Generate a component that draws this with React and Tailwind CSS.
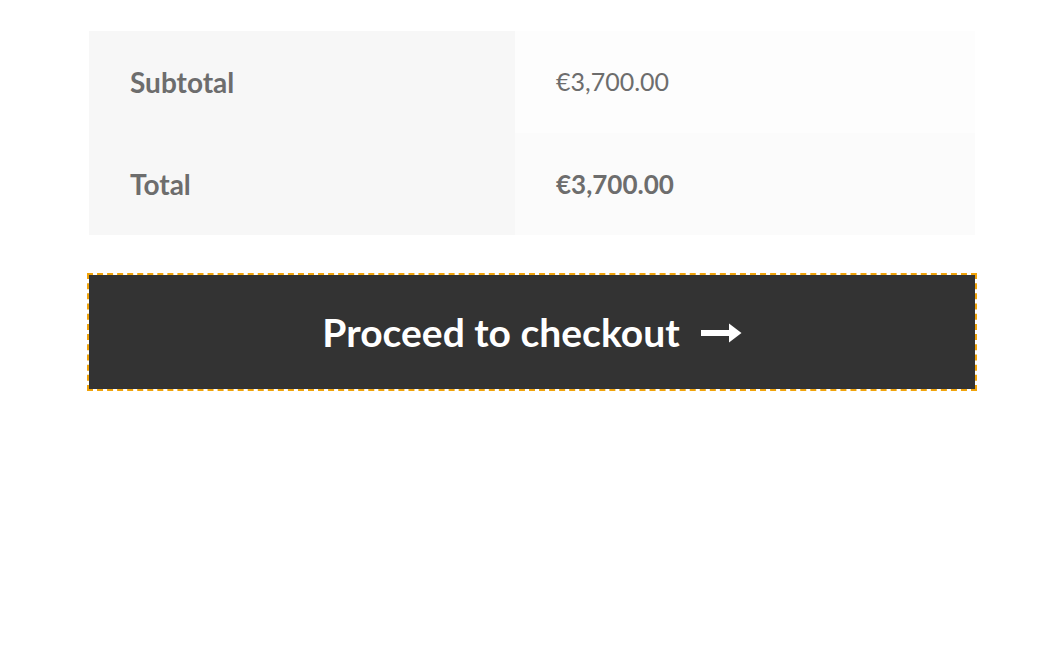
// Cart totals + checkout button
export default function App() {
  const rows = [
    { label: 'Subtotal', value: '€3,700.00', bold: false, valueBg: 'bg-[#fdfdfd]' },
    { label: 'Total', value: '€3,700.00', bold: true, valueBg: 'bg-[#fbfbfb]' },
  ]

  return (
    <div className="min-h-screen bg-white" style={{ fontFamily: 'Lato, "Open Sans", sans-serif' }}>
      <div className="mx-auto w-[886px] pt-[31px]">

        {/* Totals table */}
        <div className="grid grid-cols-[426px_1fr]">
          {rows.map((r) => (
            <div key={r.label} className="contents">
              <div className="flex h-[102px] items-center bg-[#f7f7f7] pl-[41px] text-[28px] font-bold text-[#6d6d6d]">
                {r.label}
              </div>
              <div
                className={`flex h-[102px] items-center pl-[41px] text-[#6d6d6d] ${r.valueBg} ${r.bold ? 'text-[26px] font-bold' : 'text-[25px] font-normal'}`}
              >
                {r.value}
              </div>
            </div>
          ))}
        </div>

        {/* Checkout button */}
        <button className="mt-[40px] flex h-[114px] w-full items-center justify-center gap-[20px] bg-[#333333] text-[39px] font-bold text-white outline-2 outline-dashed outline-[#f0a30a]">
          <span>Proceed to checkout</span>
          <svg width="42" height="20" viewBox="0 0 42 20" className="mt-[2px]">
            <path d="M1 10 H31" stroke="white" strokeWidth="6" />
            <path d="M29 0.5 L41.5 10 L29 19.5 Z" fill="white" />
          </svg>
        </button>
      </div>
    </div>
  )
}
